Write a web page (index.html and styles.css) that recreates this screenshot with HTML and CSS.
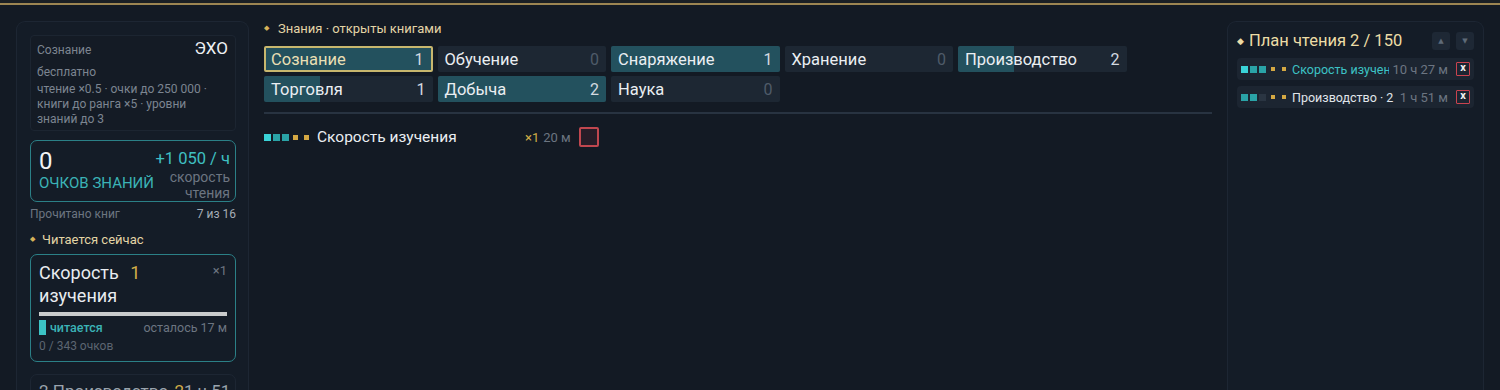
FILE: index.html
```html
<!DOCTYPE html>
<html lang="ru">
<head>
  <meta charset="UTF-8" />
  <title>Знания</title>
  <link rel="stylesheet" href="styles.css">
</head>
<body>
  <div class="topbar"></div>
  <div class="layout">
    <!-- левая колонка -->
    <aside class="side">
      <div class="mode">
        <div class="mode-head">
          <span class="mode-name">Сознание</span>
          <span class="mode-tag">ЭХО</span>
        </div>
        <div class="mode-cost">бесплатно</div>
        <p class="mode-text">чтение ×0.5 · очки до 250 000 · книги до ранга ×5 · уровни знаний до 3</p>
      </div>

      <div class="points">
        <div class="points-left">
          <div class="points-val">0</div>
          <div class="points-lbl">ОЧКОВ ЗНАНИЙ</div>
        </div>
        <div class="points-right">
          <div class="rate">+1 050 / ч</div>
          <div class="rate-lbl">скорость<br>чтения</div>
        </div>
      </div>

      <div class="read-count">
        <span>Прочитано книг</span>
        <span class="read-num">7 из 16</span>
      </div>

      <div class="sec-title"><span class="dot">◆</span>Читается сейчас</div>

      <div class="book">
        <div class="book-head">
          <div class="book-name">Скорость <span class="gold">1</span><br>изучения</div>
          <div class="book-mult">×1</div>
        </div>
        <div class="book-bar"></div>
        <div class="book-state">
          <span class="state-on"><i class="state-mark"></i>читается</span>
          <span>осталось 17 м</span>
        </div>
        <div class="book-pts">0 / 343 очков</div>
      </div>

      <div class="book next">
        <div class="next-line">2 Производство <span class="gold">2</span>1 ч 51 м</div>
      </div>
    </aside>

    <!-- центр -->
    <main class="center">
      <div class="sec-title"><span class="dot">◆</span>Знания · открыты книгами</div>

      <div class="chips">
        <div class="chip active"><span class="fill" style="width:100%"></span><span class="chip-name">Сознание</span><span class="chip-num">1</span></div>
        <div class="chip"><span class="chip-name">Обучение</span><span class="chip-num zero">0</span></div>
        <div class="chip"><span class="fill" style="width:100%"></span><span class="chip-name">Снаряжение</span><span class="chip-num">1</span></div>
        <div class="chip"><span class="chip-name">Хранение</span><span class="chip-num zero">0</span></div>
        <div class="chip"><span class="fill" style="width:33%"></span><span class="chip-name">Производство</span><span class="chip-num">2</span></div>
        <div class="chip"><span class="fill" style="width:33%"></span><span class="chip-name">Торговля</span><span class="chip-num">1</span></div>
        <div class="chip"><span class="fill" style="width:100%"></span><span class="chip-name">Добыча</span><span class="chip-num">2</span></div>
        <div class="chip"><span class="chip-name">Наука</span><span class="chip-num zero">0</span></div>
      </div>

      <div class="divider"></div>

      <div class="know-row">
        <span class="pips">
          <i class="pip t1"></i><i class="pip t2"></i><i class="pip t2"></i><i class="pip g"></i><i class="pip g"></i>
        </span>
        <span class="know-name">Скорость изучения</span>
        <span class="know-mult">×1</span>
        <span class="know-time">20 м</span>
        <span class="check"></span>
      </div>
    </main>

    <!-- правая колонка -->
    <aside class="plan">
      <div class="plan-head">
        <div class="plan-title"><span class="dot">◆</span>План чтения 2 / 150</div>
        <div class="arrows">
          <button class="arr">▲</button>
          <button class="arr">▼</button>
        </div>
      </div>
      <div class="plan-item">
        <span class="pips">
          <i class="pip t1"></i><i class="pip t2"></i><i class="pip t2"></i><i class="pip g"></i><i class="pip g"></i>
        </span>
        <span class="plan-name teal">Скорость изучения</span>
        <span class="plan-time">10 ч 27 м</span>
        <span class="del">x</span>
      </div>
      <div class="plan-item">
        <span class="pips">
          <i class="pip t2"></i><i class="pip t2"></i><i class="pip off"></i><i class="pip g"></i><i class="pip g"></i>
        </span>
        <span class="plan-name">Производство · 2</span>
        <span class="plan-time">1 ч 51 м</span>
        <span class="del">x</span>
      </div>
    </aside>
  </div>
</body>
</html>
```

FILE: styles.css
```css
body {
  margin: 0;
  background: #131a24;
  font-family: Roboto, "Noto Sans", sans-serif;
  color: #e4e9ee;
  height: 390px;
  overflow: hidden;
}
.topbar {
  height: 3px;
  background: #1a1f24;
  border-bottom: 2px solid #9c8552;
}
.layout {
  display: flex;
  gap: 15px;
  padding: 16px 16px 0;
  height: 369px;
}
.side {
  width: 233px;
  box-sizing: border-box;
  flex: none;
  background: #141c27;
  border: 1px solid #1d2633;
  border-bottom: none;
  border-radius: 9px 9px 0 0;
  padding: 13px 12px 0 13px;
  overflow: hidden;
}
.mode {
  border: 1px solid #1c2531;
  border-radius: 4px;
  padding: 2px 7px 0 6px;
  height: 96px;
  box-sizing: border-box;
  background: #141b25;
}
.mode-head {
  display: flex;
  justify-content: space-between;
  align-items: baseline;
  line-height: 20px;
}
.mode-name {
  font-size: 12px;
  color: #7c8591;
}
.mode-tag {
  font-size: 17px;
  color: #eef1f4;
}
.mode-cost {
  font-size: 12px;
  line-height: 15px;
  color: #7c8591;
  margin-top: 5px;
}
.mode-text {
  margin: 2px 0 0;
  font-size: 12px;
  line-height: 15px;
  color: #7c8591;
}
.points {
  margin-top: 9px;
  border: 1px solid #2b8087;
  border-radius: 7px;
  height: 62px;
  box-sizing: border-box;
  display: flex;
  justify-content: space-between;
  padding: 7px 5px 0 8px;
}
.points-val {
  font-size: 24px;
  line-height: 26px;
  color: #f2f4f6;
}
.points-lbl {
  font-size: 15px;
  line-height: 18px;
  color: #3bb3b6;
}
.points-right {
  text-align: right;
  padding-top: 1px;
}
.rate {
  font-size: 16.5px;
  color: #3fc0c2;
  line-height: 19px;
}
.rate-lbl {
  font-size: 14px;
  color: #6c7581;
  line-height: 16px;
  margin-top: 1px;
}
.read-count {
  display: flex;
  justify-content: space-between;
  font-size: 12px;
  color: #6c7581;
  margin-top: 5px;
}
.read-num {
  color: #a4acb6;
}
.sec-title {
  font-size: 13px;
  line-height: 15px;
  color: #e3d5a6;
  display: flex;
  align-items: center;
}
.side .sec-title {
  margin-top: 11px;
}
.dot {
  font-size: 7px;
  color: #d6b25a;
  margin-right: 7px;
}
.book {
  margin-top: 7px;
  border: 1px solid #2b8087;
  border-radius: 7px;
  padding: 6px 8px 0;
  height: 108px;
  box-sizing: border-box;
}
.book-head {
  display: flex;
  justify-content: space-between;
}
.book-name {
  font-size: 18px;
  line-height: 23px;
  color: #e8ecf0;
}
.gold {
  color: #d2ae48;
  margin-left: 7px;
}
.book-mult {
  font-size: 13px;
  color: #6c7581;
  margin-top: 2px;
}
.book-bar {
  height: 4px;
  background: #c9cbcc;
  margin-top: 5px;
}
.book-state {
  display: flex;
  justify-content: space-between;
  align-items: center;
  font-size: 12.5px;
  line-height: 15px;
  color: #6c7581;
  margin-top: 4px;
}
.state-on {
  color: #3bb3b6;
  font-weight: 500;
  display: flex;
  align-items: center;
}
.state-mark {
  display: inline-block;
  width: 7px;
  height: 15px;
  background: #3cc3c5;
  margin-right: 4px;
}
.book-pts {
  font-size: 12px;
  line-height: 14px;
  color: #5c6571;
  margin-top: 4px;
}
.book.next {
  border-color: #1d2633;
  margin-top: 12px;
  white-space: nowrap;
  overflow: hidden;
}
.next-line {
  font-size: 17px;
  color: #9aa3ad;
}
.next-line .gold {
  margin-left: 2px;
}

.center {
  width: 948px;
  flex: none;
}
.center .dot {
  margin-right: 9px;
}
.chips {
  display: grid;
  grid-template-columns: repeat(5, 168.5px);
  gap: 4px 5px;
  margin-top: 10px;
}
.chip {
  position: relative;
  height: 26px;
  background: #1d2733;
  border-radius: 2px;
  display: flex;
  align-items: center;
  justify-content: space-between;
  padding: 0 7px 0 7px;
  overflow: hidden;
  box-sizing: border-box;
}
.chip .fill {
  position: absolute;
  left: 0;
  top: 0;
  bottom: 0;
  background: #23515e;
}
.chip.active {
  border: 2px solid #c8b76e;
  padding-left: 5px;
  padding-right: 7px;
}
.chip.active .chip-name {
  color: #e9dfb4;
}
.chip-name {
  position: relative;
  font-size: 16.5px;
  color: #eaeef2;
}
.chip-num {
  position: relative;
  font-size: 16px;
  color: #d4dae0;
}
.chip-num.zero {
  color: #4f5b69;
}
.divider {
  height: 2px;
  background: #283341;
  margin-top: 10px;
}
.know-row {
  display: flex;
  align-items: center;
  margin-top: 13px;
  height: 20px;
}
.pips {
  display: flex;
  align-items: center;
  gap: 2px;
}
.pip {
  display: inline-block;
  width: 7px;
  height: 7px;
  background: #2aa3a7;
}
.pip.t1 {
  background: #3ad3d8;
}
.pip.g {
  width: 5px;
  height: 5px;
  background: #d4a843;
  margin-left: 2px;
}
.pip.g + .pip.g {
  margin-left: 4px;
}
.pip.off {
  background: #2a3542;
}
.know-name {
  font-size: 15.5px;
  margin-left: 8px;
  width: 208px;
  color: #eaeef2;
}
.know-mult {
  font-size: 13px;
  color: #d2ae48;
}
.know-time {
  font-size: 13px;
  color: #6c7581;
  margin-left: 4px;
}
.check {
  width: 20px;
  height: 20px;
  box-sizing: border-box;
  border: 2px solid #c0474f;
  border-radius: 2px;
  background: #261d28;
  margin-left: 8px;
}

.plan {
  width: 257px;
  flex: none;
  box-sizing: border-box;
  background: #141c27;
  border: 1px solid #1d2633;
  border-bottom: none;
  border-radius: 9px 9px 0 0;
  padding: 9px 9px 0;
}
.plan-head {
  display: flex;
  justify-content: space-between;
  align-items: center;
}
.plan-title {
  font-size: 16.5px;
  color: #ecdca6;
  display: flex;
  align-items: center;
}
.plan .dot {
  font-size: 9px;
  color: #ecdca6;
  margin-right: 5px;
}
.arrows {
  display: flex;
  gap: 6px;
}
.arr {
  width: 18px;
  height: 18px;
  padding: 0;
  border: none;
  border-radius: 3px;
  background: #1e2835;
  color: #5e6a78;
  font-size: 7px;
  font-family: "DejaVu Sans", sans-serif;
}
.plan-item {
  display: flex;
  align-items: center;
  height: 22px;
  background: #1c2531;
  border-radius: 4px;
  margin-top: 6px;
  padding: 0 4px 0 4px;
  white-space: nowrap;
}
.plan-head + .plan-item {
  margin-top: 8px;
}
.plan-item .pip.g {
  width: 4px;
  height: 4px;
  margin-left: 3px;
}
.plan-item .pip.g + .pip.g {
  margin-left: 5px;
}
.plan-name {
  font-size: 12.5px;
  margin-left: 6px;
  color: #e0e5ea;
  flex: 1;
  min-width: 0;
  overflow: hidden;
}
.plan-name.teal {
  color: #3cc3c5;
}
.plan-time {
  flex: none;
  font-size: 13px;
  color: #6c7581;
  margin-left: 3px;
}
.del {
  flex: none;
  width: 14px;
  height: 14px;
  box-sizing: border-box;
  border: 1.5px solid #c9434f;
  border-radius: 1px;
  font-size: 11px;
  line-height: 10px;
  text-align: center;
  color: #f2f2f2;
  font-weight: bold;
  margin-left: 8px;
}
```
